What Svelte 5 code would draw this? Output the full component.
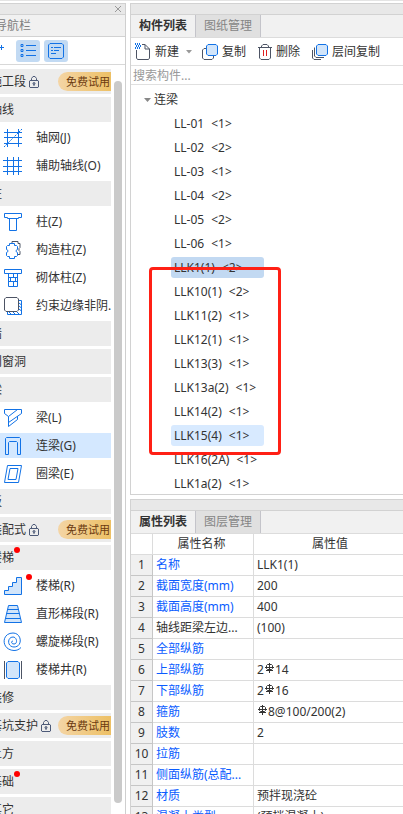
<script lang="ts">
	type Stroke = { d: string; kind?: 'fill' | 'grey' | 'dash' };
	type NavRow = { label: string; icon?: string; trial?: boolean; dot?: boolean; active?: boolean };

	const icons: Record<string, Stroke[]> = {
		grid: [
			{ d: 'M3.5 0v18M14.5 0v18M0 3.5h18M0 8.5h18M0 14.5h18' },
			{ d: 'M0 18L18 0', kind: 'dash' }
		],
		axis: [{ d: 'M3.5 0v18M9.5 0v18M14.5 0v18M-1 3.5h19M-1 9.5h19M-1 14.5h19' }],
		column: [{ d: 'M.5.5h17v4h-3v1h-11v-1h-3zM5.5 6v11.5h7V6' }],
		structural: [
			{ d: 'M8 2.5V.5h6v2h2v4l-1 1v2l1 1v3h-2', kind: 'grey' },
			{ d: 'M5.5 2.5h5v2h2l1 1v3l-1.5 1v1l1.5 1v3l-1 1h-2v2h-5v-2h-2l-1-1v-3l1.500-1v-1l-1.500-1v-3l1-1h2z' }
		],
		brick: [{ d: 'M.5.5h17v4H.5zM4.5 4.5v13h9v-13M4.5 8.5h9M4.5 12.5h9M9.5 4.5v4M6.5 8.5v4M11.5 8.5v4M9.5 12.5v5' }],
		edge: [
			{ d: 'M15 3.5h2.5v14h-14V15M15 6l2.5 2M15 9l2.5 2M15 12l2.5 2M13 15l2.5 2.5M9 15l2.5 2.5M5 15l2.5 2.5' },
			{ d: 'M2 .5h11L14.5 2v11L13 14.5H2L.5 13V2z', kind: 'grey' }
		],
		beam: [{ d: 'M.5.5h17v4L4.5 13.5M.5.5v4l4 3v10M4.5 7.5l9-7M4.5 17.5l9-7v-3.500' }],
		coupling: [{ d: 'M1.5 17.5v-16l1-1h13l1 1v16h-3V5.5l-1-1h-7l-1 1v12z' }],
		ring: [{ d: 'M3.5.5h14l-3 17H.5zM6 3.5h8l-2 11H4z' }],
		stairs: [{ d: 'M.5 17.5v-4h4v-4h4v-4h4v-5h5v17z', kind: 'fill' }],
		straight: [{ d: 'M4.5.5h9l4 17h-17zM3.5 4.5h11M2.5 8.5h13M1.5 13.5h15', kind: 'fill' }],
		spiral: [{ d: 'M9 8c-2 0-2 3 1 3 4 0 3-7-1-7-6 0-6 10 1 10 9 0 8-14-1-14C-3 0-3 17 10 17.5c3 0 5-1 7-3' }],
		well: [
			{ d: 'M.5 0v18M17.5 0v18', kind: 'grey' },
			{ d: 'M4 .5h10L15.500 2v14L14 17.5H4L2.5 16V2z', kind: 'fill' }
		]
	};

	const nav: NavRow[] = [
		{ label: '施工段', trial: true },
		{ label: '轴线' },
		{ label: '轴网(J)', icon: 'grid' },
		{ label: '辅助轴线(O)', icon: 'axis' },
		{ label: '柱' },
		{ label: '柱(Z)', icon: 'column' },
		{ label: '构造柱(Z)', icon: 'structural' },
		{ label: '砌体柱(Z)', icon: 'brick' },
		{ label: '约束边缘非阴...', icon: 'edge' },
		{ label: '墙' },
		{ label: '门窗洞' },
		{ label: '梁' },
		{ label: '梁(L)', icon: 'beam' },
		{ label: '连梁(G)', icon: 'coupling', active: true },
		{ label: '圈梁(E)', icon: 'ring' },
		{ label: '板' },
		{ label: '装配式', trial: true },
		{ label: '楼梯', dot: true },
		{ label: '楼梯(R)', icon: 'stairs', dot: true },
		{ label: '直形梯段(R)', icon: 'straight' },
		{ label: '螺旋梯段(R)', icon: 'spiral' },
		{ label: '楼梯井(R)', icon: 'well' },
		{ label: '装修' },
		{ label: '基坑支护', trial: true },
		{ label: '土方' },
		{ label: '基础', dot: true },
		{ label: '其它' }
	];

	const members = [
		['LL-01', 1],
		['LL-02', 2],
		['LL-03', 1],
		['LL-04', 2],
		['LL-05', 2],
		['LL-06', 1],
		['LLK1(1)', 2],
		['LLK10(1)', 2],
		['LLK11(2)', 1],
		['LLK12(1)', 1],
		['LLK13(3)', 1],
		['LLK13a(2)', 1],
		['LLK14(2)', 1],
		['LLK15(4)', 1],
		['LLK16(2A)', 1],
		['LLK1a(2)', 1]
	] as [string, number][];

	// '#' stands for the rebar grade sign
	const props = [
		{ name: '名称', value: 'LLK1(1)' },
		{ name: '截面宽度(mm)', value: '200' },
		{ name: '截面高度(mm)', value: '400' },
		{ name: '轴线距梁左边...', value: '(100)', plain: true },
		{ name: '全部纵筋', value: '' },
		{ name: '上部纵筋', value: '2#14' },
		{ name: '下部纵筋', value: '2#16' },
		{ name: '箍筋', value: '#8@100/200(2)' },
		{ name: '肢数', value: '2' },
		{ name: '拉筋', value: '' },
		{ name: '侧面纵筋(总配...', value: '' },
		{ name: '材质', value: '预拌现浇砼' },
		{ name: '混凝土类型', value: '(预拌混凝土)' }
	];

	let selected = 'LLK1(1)';
	const hovered = 'LLK15(4)';
</script>

<div class="app">
	<aside class="nav">
		<div class="grip">
			<button class="close" type="button" aria-label="关闭">
				<svg width="8" height="8" viewBox="0 0 8 8"><path d="M1 1l6 6M7 1L1 7" /></svg>
			</button>
		</div>
		<h2 class="nav-title">导航栏</h2>
		<div class="nav-tools">
			<button class="add" type="button" aria-label="添加">
				<svg width="6" height="8" viewBox="0 0 6 8"><path d="M0 3.5h4M1.5 1v5" /></svg>
			</button>
			<button class="view" type="button" aria-label="列表">
				<svg width="16" height="16" viewBox="0 0 16 16">
					<path d="M1 1.5h2v2H1zM1 6.5h2v2H1zM1 11.5h2v2H1zM6 2.5h10M6 7.5h10M6 12.5h10" />
				</svg>
			</button>
			<button class="view" type="button" aria-label="面板">
				<svg width="16" height="16" viewBox="0 0 16 16">
					<path d="M2 .5h12L15.5 2v12L14 15.5H2L.5 14V2zM3 4.5h2M6 4.5h7M3 7.5h2M6 7.5h5M3 10.5h5" />
				</svg>
			</button>
		</div>
		<div class="nav-body">
			<div class="nav-list">
				{#each nav as row}
					{#if row.icon}
						<button class="row item" class:active={row.active} type="button">
							<svg class="icon" width="18" height="18" viewBox="0 0 18 18" aria-hidden="true">
								{#each icons[row.icon] as s}
									<path class={s.kind ?? 'line'} d={s.d} />
								{/each}
							</svg>
							<span>{row.label}</span>
							{#if row.dot}<i class="dot"></i>{/if}
						</button>
					{:else}
						<button class="row section" type="button">
							<span>{row.label}</span>
							{#if row.trial}
								<svg class="lock" width="10" height="12" viewBox="0 0 10 12" aria-hidden="true">
									<path d="M1 4.5h8l.5.5v6l-.5.5H1L.5 11V5zM2.5 4.5v-2l1.500-2h2l1.500 2v2M5 7v3" />
									<circle cx="5" cy="7.5" r="1" />
								</svg>
								<span class="trial">免费试用</span>
							{/if}
							{#if row.dot}<i class="dot"></i>{/if}
						</button>
					{/if}
				{/each}
			</div>
			<div class="scroll"></div>
		</div>
	</aside>

	<main class="main">
		<section class="panel">
			<div class="grip"></div>
			<div class="tabs">
				<button class="tab on" type="button">构件列表</button>
				<button class="tab" type="button">图纸管理</button>
			</div>
			<div class="toolbar">
				<button class="new" type="button">
					<svg width="16" height="17" viewBox="0 0 16 17" aria-hidden="true">
						<path class="grey" d="M1.5 7v8l1 1.5h11l1-1.5V6L10 1.5H7M10 1.5V6h4.500" />
						<path class="pix" d="M0 1h6M0 5h6" />
						<path class="pix" d="M1 3h5" />
					</svg>
					新建
					<svg class="drop" width="6" height="4" viewBox="0 0 6 4" aria-hidden="true"><path d="M0 0h6L3 3.5z" /></svg>
				</button>
				<button type="button">
					<svg width="16" height="16" viewBox="0 0 16 16" aria-hidden="true">
						<path class="grey" d="M4 4.5H2L.5 6v8L2 15.5h8l1.500-1.500v-2" />
						<path class="fill" d="M6 .5h8L15.5 2v8L14 11.5H6L4.500 10V2z" />
					</svg>
					复制
				</button>
				<button type="button">
					<svg width="14" height="16" viewBox="0 0 14 16" aria-hidden="true">
						<path class="grey" d="M0 3.5h14M3.5 3V2L5 .5h4L10.5 2v1M1.5 3.5V14L3 15.5h8l1.500-1.500V3.5" />
						<path class="red" d="M5.5 6v6M8.5 6v6" />
					</svg>
					删除
				</button>
				<button type="button">
					<svg width="16" height="16" viewBox="0 0 16 16" aria-hidden="true">
						<path class="grey" d="M.5 6v8L2 15.5h7M2.5 3.5V12L4 13.5h8" />
						<path class="fill" d="M6 .5h8L15.5 2v8L14 11.5H6L4.500 10V2z" />
					</svg>
					层间复制
				</button>
			</div>
			<input class="search" type="text" placeholder="搜索构件..." aria-label="搜索构件" />
			<div class="tree">
				<button class="group" type="button">
					<svg width="7" height="4" viewBox="0 0 7 4" aria-hidden="true"><path d="M0 0h7L3.5 4z" /></svg>
					连梁
				</button>
				{#each members as [name, count]}
					<button
						class="member"
						class:selected={name === selected}
						class:hovered={name === hovered}
						type="button"
						on:click={() => (selected = name)}
					>
						<span>{name}</span><span>&lt;{count}&gt;</span>
					</button>
				{/each}
				<div class="marker"></div>
			</div>
		</section>

		<section class="panel props">
			<div class="grip"></div>
			<div class="tabs">
				<button class="tab on" type="button">属性列表</button>
				<button class="tab" type="button">图层管理</button>
			</div>
			<table>
				<thead>
					<tr>
						<th class="num"></th>
						<th class="name">属性名称</th>
						<th>属性值</th>
					</tr>
				</thead>
				<tbody>
					{#each props as p, i}
						<tr>
							<td class="num">{i + 1}</td>
							<td class="name" class:plain={p.plain}>{p.name}</td>
							<td>
								{#each p.value.split('#') as part, n}
									{#if n > 0}
										<svg class="rebar" width="9" height="10" viewBox="0 0 9 10" role="img" aria-label="三级钢">
											<path d="M4.5 0v10M2.5 1.5h4l1 1v3l-1 1h-4l-1-1v-3zM0 4.5h9M1 7.5h7" />
										</svg>
									{/if}{part}
								{/each}
							</td>
						</tr>
					{/each}
				</tbody>
			</table>
		</section>
	</main>
</div>

<style>
	:global(body) {
		background: #fff;
		overflow: hidden;
	}

	.app {
		display: flex;
		gap: 4px;
		height: 100vh;
		padding-top: 3px;
		box-sizing: border-box;
		overflow: hidden;
		background: linear-gradient(#e4e4e4 1px, #fff 1px);
		font-family: 'Noto Sans', 'Noto Sans CJK SC', sans-serif;
		font-size: 12px;
		line-height: 18px;
		color: #333;
	}

	button {
		margin: 0;
		padding: 0;
		border: 0;
		background: none;
		font: inherit;
		color: inherit;
		text-align: left;
		white-space: nowrap;
	}

	svg {
		flex: none;
		fill: none;
		stroke: #1272e6;
	}

	.grip {
		display: flex;
		align-items: center;
		justify-content: flex-end;
		height: 10px;
		border-top: 1px solid #d2d2d2;
		border-bottom: 1px solid #d2d2d2;
		background: #e8e8e8;
	}

	/* navigation */
	.nav {
		flex: none;
		display: flex;
		flex-direction: column;
		width: 125px;
		border-right: 1px solid #cfcfcf;
		overflow: hidden;
	}

	.close {
		display: flex;
		margin-right: 3px;
	}

	.close svg {
		stroke: #999;
	}

	.nav-title {
		margin: 0;
		height: 21px;
		line-height: 21px;
		text-indent: -5px;
		border-bottom: 1px solid #d2d2d2;
		background: #f1f1f1;
		font-size: 12px;
		font-weight: 400;
		color: #808080;
	}

	.nav-tools {
		display: flex;
		align-items: center;
		gap: 4px;
		height: 27px;
		border-bottom: 1px solid #d8d8d8;
	}

	.add {
		display: flex;
		width: 12px;
		height: 14px;
	}

	.view {
		display: grid;
		place-items: center;
		width: 24px;
		height: 22px;
		border-radius: 3px;
		background: #c2daf3;
	}

	.nav-body {
		flex: 1;
		display: flex;
		gap: 3px;
		min-height: 0;
		padding-top: 4px;
	}

	.nav-list {
		flex: none;
		display: flex;
		flex-direction: column;
		gap: 3px;
		width: 111px;
		overflow: hidden;
	}

	.row {
		flex: none;
		display: flex;
		align-items: center;
		height: 25px;
		overflow: hidden;
	}

	.section {
		background: #ececec;
	}

	.section > span:first-child {
		margin-left: -10px;
	}

	.item {
		position: relative;
		gap: 14px;
		padding-left: 4px;
	}

	.active {
		background: #d4e8ff;
	}

	.icon {
		overflow: visible;
	}

	.fill {
		fill: #d2e5fa;
	}

	.grey {
		stroke: #4d5464;
	}

	.icon .grey:last-child {
		fill: #fff;
	}

	.dash {
		stroke-dasharray: 2 1;
	}

	.lock {
		margin-left: 3px;
		stroke: #4d5a78;
	}

	.trial {
		flex: none;
		width: 45px;
		height: 19px;
		margin-left: auto;
		padding-left: 8px;
		border-radius: 10px 0 0 10px;
		background: linear-gradient(90deg, #f4d5a5, #edc065);
		font-size: 11px;
		line-height: 19px;
		color: #6b3a10;
	}

	.dot {
		align-self: flex-start;
		flex: none;
		width: 6px;
		height: 6px;
		margin-top: 2px;
		border-radius: 3px;
		background: #f00;
	}

	.item .dot {
		position: absolute;
		left: 26px;
		top: 1px;
		margin: 0;
	}

	.scroll {
		width: 8px;
		margin: 12px 0 11px;
		border-radius: 4px;
		background: #cacaca;
	}

	/* right side */
	.main {
		flex: 1;
		display: flex;
		flex-direction: column;
		gap: 4px;
		min-width: 0;
	}

	.panel {
		flex: none;
		border-left: 1px solid #d2d2d2;
		border-bottom: 1px solid #d2d2d2;
	}

	.tabs {
		display: flex;
		height: 22px;
		border-bottom: 1px solid #dcdcdc;
		background: #f1f1f1;
	}

	.tab {
		width: 65px;
		border-right: 1px solid #c4c4ca;
		background: #e0e0e0;
		line-height: 22px;
		text-align: center;
		color: #858585;
	}

	.tab.on {
		background: #f1f1f1;
		font-weight: 700;
		color: #333;
	}

	.toolbar {
		display: flex;
		align-items: center;
		gap: 12px;
		height: 27px;
		padding-left: 4px;
		border-bottom: 1px solid #e0e0e0;
	}

	.toolbar button {
		display: flex;
		align-items: center;
		gap: 4px;
	}

	.toolbar .new {
		margin-right: -2px;
	}

	.drop {
		margin-left: 3px;
		fill: #999;
		stroke: none;
	}

	.pix {
		stroke-dasharray: 1 1;
		stroke-width: 2;
	}

	.red {
		stroke: #e02020;
	}

	.search {
		display: block;
		box-sizing: border-box;
		width: 100%;
		height: 19px;
		padding: 0 2px;
		border: 0;
		border-bottom: 1px solid #e0e0e0;
		outline: 0;
		font: inherit;
	}

	.search::placeholder {
		color: #999;
		opacity: 1;
	}

	.tree {
		position: relative;
		display: flex;
		flex-direction: column;
		align-items: flex-start;
		gap: 3px;
		padding: 4px 0 0;
	}

	.group,
	.member {
		flex: none;
		display: flex;
		align-items: center;
		height: 21px;
	}

	.group {
		gap: 3px;
		margin-left: 13px;
	}

	.group svg {
		fill: #888;
		stroke: none;
	}

	.member {
		gap: 7px;
		min-width: 93px;
		margin-left: 40px;
		padding-left: 3px;
		box-sizing: border-box;
		border-radius: 3px;
	}

	.hovered {
		background: #d8eaff;
	}

	.selected {
		background: #c2d9f2;
	}

	/* red frame over the listed members */
	.marker {
		position: absolute;
		left: 18px;
		top: 182px;
		width: 126px;
		height: 182px;
		border: 3px solid #ff2015;
		border-radius: 4px;
		pointer-events: none;
	}

	/* properties */
	.props {
		flex: 1;
		min-height: 0;
		border-bottom: 0;
		overflow: hidden;
	}

	table {
		width: 100%;
		table-layout: fixed;
		border-collapse: separate;
		border-spacing: 0;
	}

	th,
	td {
		height: 20px;
		padding: 0 0 0 3px;
		border-right: 1px solid #dcdcdc;
		border-bottom: 1px solid #dcdcdc;
		font-weight: 400;
		line-height: 20px;
		white-space: nowrap;
		overflow: hidden;
	}

	th.name {
		padding: 0 3px 0 0;
	}

	th:last-child,
	td:last-child {
		border-right: 0;
	}

	.num,
	th.num {
		width: 21px;
		padding: 0;
		text-align: center;
	}

	.name {
		width: 97px;
	}

	td.num {
		border-color: #c6c6c6;
		background: #f0f0f0;
	}

	td.name {
		color: #0a5cff;
	}

	td.plain {
		color: #333;
	}

	.rebar {
		margin: 0 1px;
		vertical-align: 1px;
		stroke: #333;
	}
</style>
